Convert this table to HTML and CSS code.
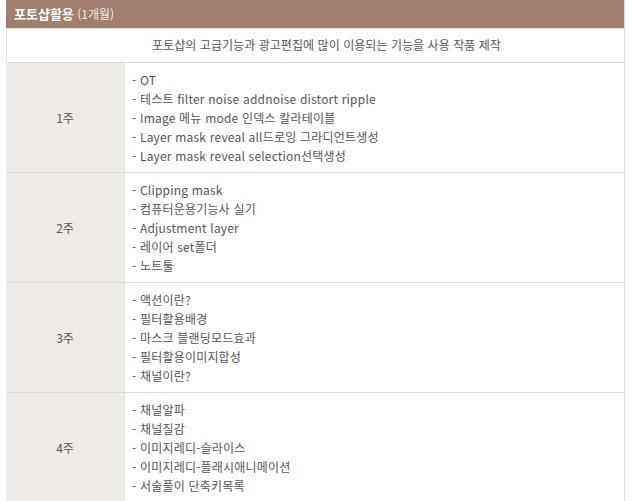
FILE: index.html
```html
<!DOCTYPE html>
<html lang="ko">
<head>
<meta charset="utf-8">
<link rel="stylesheet" href="styles.css">
</head>
<body>
<div class="wrap">
  <div class="head"><b>포토샵활용</b> <span class="sub">(1개월)</span></div>
  <div class="summary">포토샵의 고급기능과 광고편집에 많이 이용되는 기능을 사용 작품 제작</div>
  <div class="row">
    <div class="wk">1주</div>
    <ul class="items">
      <li>- OT</li>
      <li>- 테스트 filter noise addnoise distort ripple</li>
      <li>- Image 메뉴 mode 인덱스 칼라테이블</li>
      <li>- Layer mask reveal all드로잉 그라디언트생성</li>
      <li>- Layer mask reveal selection선택생성</li>
    </ul>
  </div>
  <div class="row">
    <div class="wk">2주</div>
    <ul class="items">
      <li>- Clipping mask</li>
      <li>- 컴퓨터운용기능사 실기</li>
      <li>- Adjustment layer</li>
      <li>- 레이어 set폴더</li>
      <li>- 노트툴</li>
    </ul>
  </div>
  <div class="row">
    <div class="wk">3주</div>
    <ul class="items">
      <li>- 액션이란?</li>
      <li>- 필터활용배경</li>
      <li>- 마스크 블랜딩모드효과</li>
      <li>- 필터활용이미지합성</li>
      <li>- 채널이란?</li>
    </ul>
  </div>
  <div class="row">
    <div class="wk">4주</div>
    <ul class="items">
      <li>- 채널알파</li>
      <li>- 채널질감</li>
      <li>- 이미지레디-슬라이스</li>
      <li>- 이미지레디-플래시애니메이션</li>
      <li>- 서술풀이 단축키목록</li>
    </ul>
  </div>
</div>
</body>
</html>
```
FILE: styles.css
```css
html, body { margin: 0; padding: 0; background: #fff; }
body {
  font-family: "Noto Sans CJK KR", "Noto Sans", sans-serif;
  font-size: 12px;
  color: #555;
}
.wrap {
  margin-left: 6px;
  width: 618px;
  border-right: 1px solid #ddd;
}
.head {
  height: 28px;
  line-height: 27px;
  background: #a07f6e;
  color: #fff;
  padding-left: 8px;
  font-size: 12px;
  border-bottom: 1px solid #efe4dc;
}
.head b { font-weight: bold; font-size: 13px; }
.head .sub { font-size: 12px; color: #f3ebe6; }
.summary {
  height: 34px;
  line-height: 32px;
  text-align: center;
  padding-left: 22px;
  border-left: 1px solid #e2e2e2;
  border-bottom: 1px solid #dcdcdc;
  box-sizing: border-box;
  letter-spacing: 0.05px;
}
.row {
  display: flex;
  border-bottom: 1px solid #dcdcdc;
}
.wk {
  width: 118px;
  background: #efebe7;
  display: flex;
  align-items: center;
  justify-content: center;
}
.items {
  list-style: none;
  margin: 0;
  padding: 7px 0 7px 7px;
  border-left: 1px solid #e4e4e4;
  letter-spacing: 0.2px;
}
.items li {
  height: 19px;
  line-height: 19px;
  white-space: nowrap;
}
```
